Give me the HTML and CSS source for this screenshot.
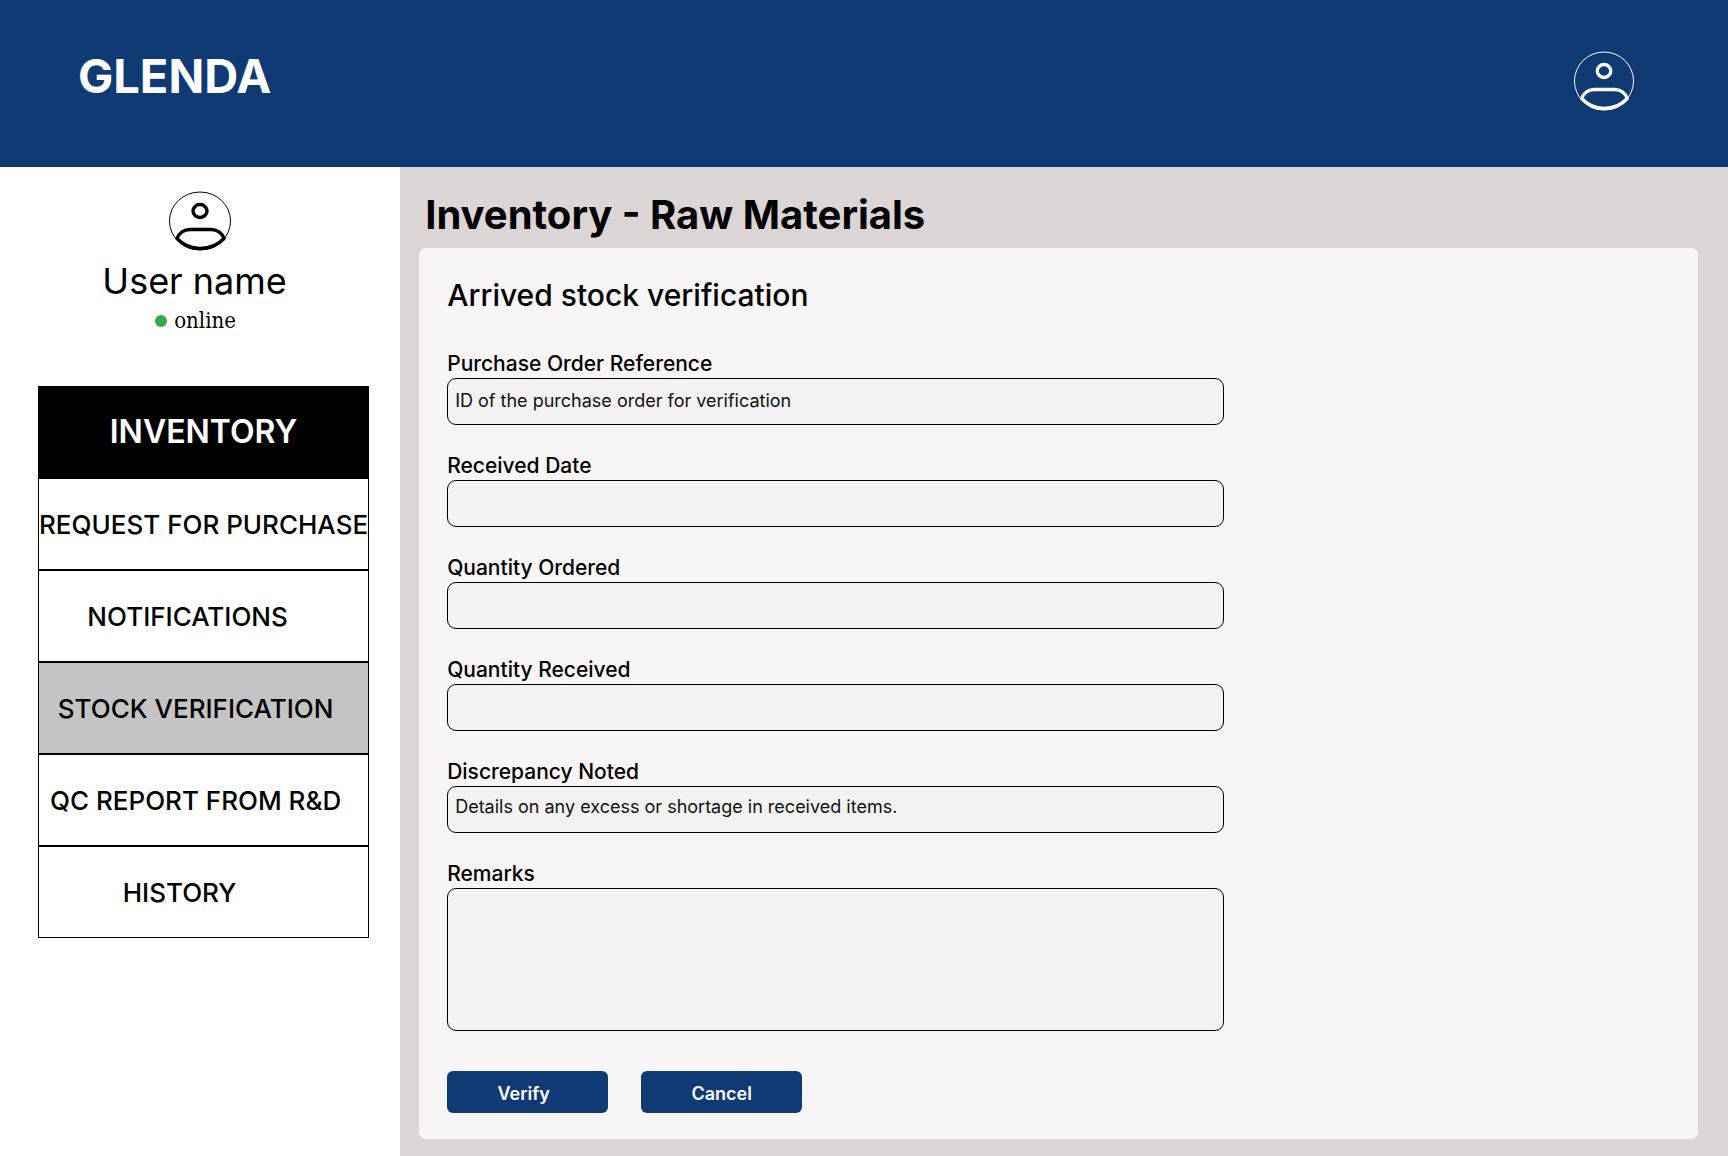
FILE: index.html
```html
<!DOCTYPE html>
<html lang="en">
<head>
<meta charset="utf-8">
<meta name="viewport" content="width=device-width, initial-scale=1">
<title>Glenda - Stock verification</title>
<link rel="stylesheet" href="styles.css">
</head>
<body>
<header class="topbar">
  <a class="brand" href="#">GLENDA</a>
  <button class="account" type="button" aria-label="Account">
    <svg class="avatar" viewBox="0 0 62 60" width="60" height="60" preserveAspectRatio="none" aria-hidden="true">
      <ellipse class="ring" cx="31" cy="30" rx="30.5" ry="29"/>
      <ellipse class="shape" cx="31" cy="20" rx="7" ry="6.5"/>
      <path class="shape" d="M21 38.5H42C48 38.5 53 42 55 47.5C49 54 40 57.5 31 57.5S14 54 8 47.5C10 42 15 38.5 21 38.5Z"/>
    </svg>
  </button>
</header>
<div class="layout">
  <aside class="sidebar">
    <div class="profile">
      <svg class="avatar" viewBox="0 0 62 60" width="62" height="60" aria-hidden="true">
        <ellipse class="ring" cx="31" cy="30" rx="30.5" ry="29"/>
        <ellipse class="shape" cx="31" cy="20" rx="7" ry="6.5"/>
        <path class="shape" d="M21 38.5H42C48 38.5 53 42 55 47.5C49 54 40 57.5 31 57.5S14 54 8 47.5C10 42 15 38.5 21 38.5Z"/>
      </svg>
      <div class="identity">
        <p class="name">User name</p>
        <p class="status"><span class="dot"></span>online</p>
      </div>
    </div>
    <nav class="menu">
      <h2 class="item heading">INVENTORY</h2>
      <a class="item" href="#">REQUEST FOR PURCHASE</a>
      <a class="item inset-m" href="#">NOTIFICATIONS</a>
      <a class="item inset-s active" href="#" aria-current="page">STOCK VERIFICATION</a>
      <a class="item inset-s" href="#">QC REPORT FROM R&amp;D</a>
      <a class="item inset-l" href="#">HISTORY</a>
    </nav>
  </aside>
  <main class="main">
    <h1 class="title">Inventory - Raw Materials</h1>
    <section class="card">
      <h2 class="subtitle">Arrived stock verification</h2>
      <form class="form">
        <div class="field">
          <label for="reference">Purchase Order Reference</label>
          <input id="reference" type="text" placeholder="ID of the purchase order for verification">
        </div>
        <div class="field">
          <label for="date">Received Date</label>
          <input id="date" type="text">
        </div>
        <div class="field">
          <label for="ordered">Quantity Ordered</label>
          <input id="ordered" type="text">
        </div>
        <div class="field">
          <label for="received">Quantity Received</label>
          <input id="received" type="text">
        </div>
        <div class="field">
          <label for="discrepancy">Discrepancy Noted</label>
          <input id="discrepancy" class="raised" type="text" placeholder="Details on any excess or shortage in received items.">
        </div>
        <div class="field">
          <label for="remarks">Remarks</label>
          <textarea id="remarks"></textarea>
        </div>
        <div class="actions">
          <button class="button verify" type="submit">Verify</button>
          <button class="button" type="button">Cancel</button>
        </div>
      </form>
    </section>
  </main>
</div>
</body>
</html>
```
FILE: styles.css
```css
* {
  box-sizing: border-box;
}

body {
  margin: 0;
  min-height: 100vh;
  display: flex;
  flex-direction: column;
  font-family: Inter, "Liberation Sans", sans-serif;
  color: #000;
  background: #fff;
}

h1, h2, p {
  margin: 0;
}

.topbar {
  display: flex;
  justify-content: space-between;
  align-items: flex-start;
  padding: 49px 94px 56px 78px;
  background: #103a74;
  color: #fff;
}

.brand {
  font-size: 47px;
  line-height: 54px;
  font-weight: 700;
  color: inherit;
  text-decoration: none;
}

.account {
  height: 62px;
  padding: 1px 0 0;
  border: 0;
  background: none;
  color: inherit;
}

.avatar {
  display: block;
  fill: none;
  stroke: currentColor;
  stroke-linejoin: round;
}

.ring {
  stroke-width: 1;
}

.shape {
  stroke-width: 3.4;
}

.layout {
  flex: 1;
  display: flex;
}

.sidebar {
  flex: 0 0 400px;
  padding: 24px 31px 24px 38px;
}

.profile {
  display: flex;
  flex-direction: column;
  align-items: center;
  padding-right: 8px;
}

.identity {
  padding-right: 10px;
  text-align: center;
}

.name {
  margin-top: 8px;
  font-size: 36px;
  line-height: 44px;
  font-weight: 400;
}

.status {
  display: flex;
  justify-content: center;
  align-items: center;
  gap: 7px;
  padding-left: 2px;
  font-family: "DejaVu Serif Condensed", "DejaVu Serif", serif;
  font-size: 22px;
  line-height: 36px;
}

.dot {
  width: 12px;
  height: 12px;
  border-radius: 50%;
  background: #34a853;
}

.menu {
  display: flex;
  flex-direction: column;
  margin-top: 47px;
}

.item {
  display: flex;
  justify-content: center;
  align-items: center;
  height: 92px;
  border: 1px solid #000;
  font-size: 26px;
  font-weight: 500;
  white-space: nowrap;
  color: #000;
  text-decoration: none;
}

.heading {
  padding-bottom: 2px;
  background: #000;
  color: #fff;
  font-size: 32px;
  font-weight: 600;
}

.active {
  background: #c4c4c4;
}

.inset-s {
  padding-right: 16px;
}

.inset-m {
  padding-right: 32px;
}

.inset-l {
  padding-right: 48px;
}

.main {
  flex: 1;
  min-width: 0;
  padding: 24px 30px 17px 19px;
  background: #dbd5d5;
}

.title {
  padding-left: 6px;
  font-size: 40px;
  line-height: 48px;
  font-weight: 700;
}

.card {
  margin-top: 9px;
  padding: 27px 28px 26px;
  border-radius: 7px;
  background: #f7f5f6;
}

.subtitle {
  font-size: 30px;
  line-height: 40px;
  font-weight: 500;
}

.form {
  display: flex;
  flex-direction: column;
  gap: 28px;
  max-width: 777px;
  margin-top: 36px;
}

.field {
  display: flex;
  flex-direction: column;
  gap: 1px;
}

label {
  font-size: 21px;
  line-height: 26px;
  font-weight: 500;
}

input,
textarea {
  width: 100%;
  height: 47px;
  padding: 0 7px 2px;
  border: 1px solid #000;
  border-radius: 9px;
  background: #f3f1f2;
  color: #000;
  font-family: inherit;
  font-size: 18px;
}

textarea {
  height: 143px;
  padding: 8px 7px;
  resize: none;
}

::placeholder {
  color: #111;
  opacity: 1;
}

.raised {
  padding-bottom: 6px;
}

.actions {
  display: flex;
  gap: 33px;
  margin-top: 12px;
}

.button {
  width: 161px;
  height: 42px;
  padding: 2px 0 0;
  border: 0;
  border-radius: 6px;
  background: #103a74;
  color: #fff;
  font-family: inherit;
  font-size: 18px;
  font-weight: 600;
}

.verify {
  padding-right: 8px;
}
```
